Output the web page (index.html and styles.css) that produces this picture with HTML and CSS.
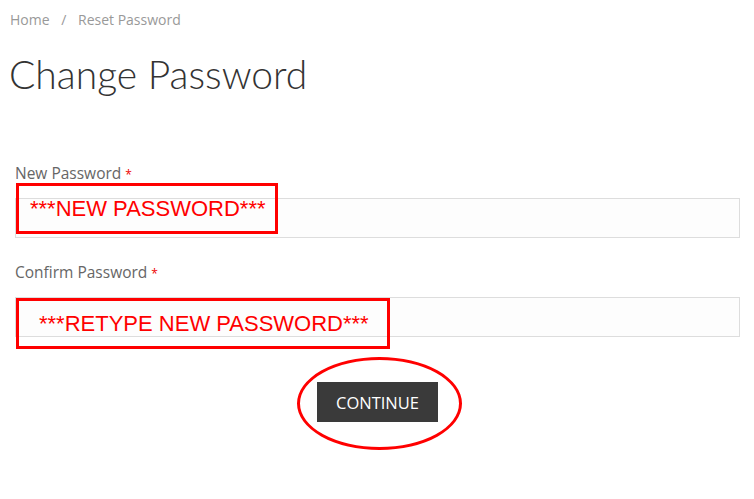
FILE: index.html
```html
<!DOCTYPE html>
<html lang="en">
<head>
    <meta charset="UTF-8">
    <meta name="viewport" content="width=device-width, initial-scale=1.0">
    <title>Change Password</title>
    <link rel="stylesheet" href="styles.css">
</head>
<body>
    <div class="breadcrumb">
        <a href="#">Home</a>
        <span class="sep">/</span>
        <span>Reset Password</span>
    </div>

    <h1>Change Password</h1>

    <form class="reset-form">
        <div class="field">
            <label for="newPass">New Password <span class="req">*</span></label>
            <div class="input-wrap">
                <input type="password" id="newPass">
                <div class="note note-new">***NEW PASSWORD***</div>
            </div>
        </div>

        <div class="field">
            <label for="confirmPass">Confirm Password <span class="req">*</span></label>
            <div class="input-wrap">
                <input type="password" id="confirmPass">
                <div class="note note-retype">***RETYPE NEW PASSWORD***</div>
            </div>
        </div>

        <div class="actions">
            <div class="btn-wrap">
                <button type="button">CONTINUE</button>
                <div class="ring"></div>
            </div>
        </div>
    </form>
</body>
</html>
```

FILE: styles.css
```css
html, body {
    min-height: 100%;
}

body {
    font-family: 'Open Sans', sans-serif;
    background-color: #fff;
    color: #333;
    margin: 0;
    padding: 0 0 60px;
}

.breadcrumb {
    padding: 9px 10px 0;
    font-size: 14px;
    color: #999;
    height: 22px;
    line-height: 22px;
}

.breadcrumb a {
    color: #999;
    text-decoration: none;
}

.breadcrumb .sep {
    margin: 0 8px;
}

h1 {
    font-family: 'Lato', sans-serif;
    font-weight: 300;
    font-size: 39px;
    color: #333;
    margin: 23px 0 0 9px;
    line-height: 40px;
}

.reset-form {
    padding: 0 14px 0 15px;
    margin-top: 69px;
}

.field {
    margin-bottom: 24px;
}

label {
    display: block;
    font-size: 15.5px;
    color: #666;
    line-height: 20px;
    margin-bottom: 13px;
}

.req {
    color: #e00;
    font-size: 12px;
}

.input-wrap {
    position: relative;
}

input {
    display: block;
    width: 100%;
    height: 40px;
    box-sizing: border-box;
    border: 1px solid #ddd;
    background: #fdfdfd;
}

.note {
    position: absolute;
    left: 1px;
    box-sizing: border-box;
    border: 3px solid #f00;
    font-family: 'Liberation Sans', Arial, sans-serif;
    font-size: 22px;
    color: #f00;
    display: flex;
    align-items: center;
}

.note-new {
    top: -15px;
    width: 262px;
    height: 51px;
    padding-left: 11px;
}

.note-retype {
    top: 1px;
    width: 374px;
    height: 51px;
    padding-left: 20px;
}

.actions {
    display: flex;
    justify-content: center;
    margin-top: 45px;
}

.btn-wrap {
    position: relative;
}

button {
    background-color: #3a3a3a;
    color: #fff;
    font-family: 'Open Sans', sans-serif;
    font-size: 16.5px;
    width: 121px;
    height: 40px;
    padding: 0;
    border: none;
    cursor: pointer;
}

.ring {
    position: absolute;
    left: -20px;
    top: -25px;
    width: 165px;
    height: 93px;
    box-sizing: border-box;
    border: 3px solid #f00;
    border-radius: 50%;
}
```
